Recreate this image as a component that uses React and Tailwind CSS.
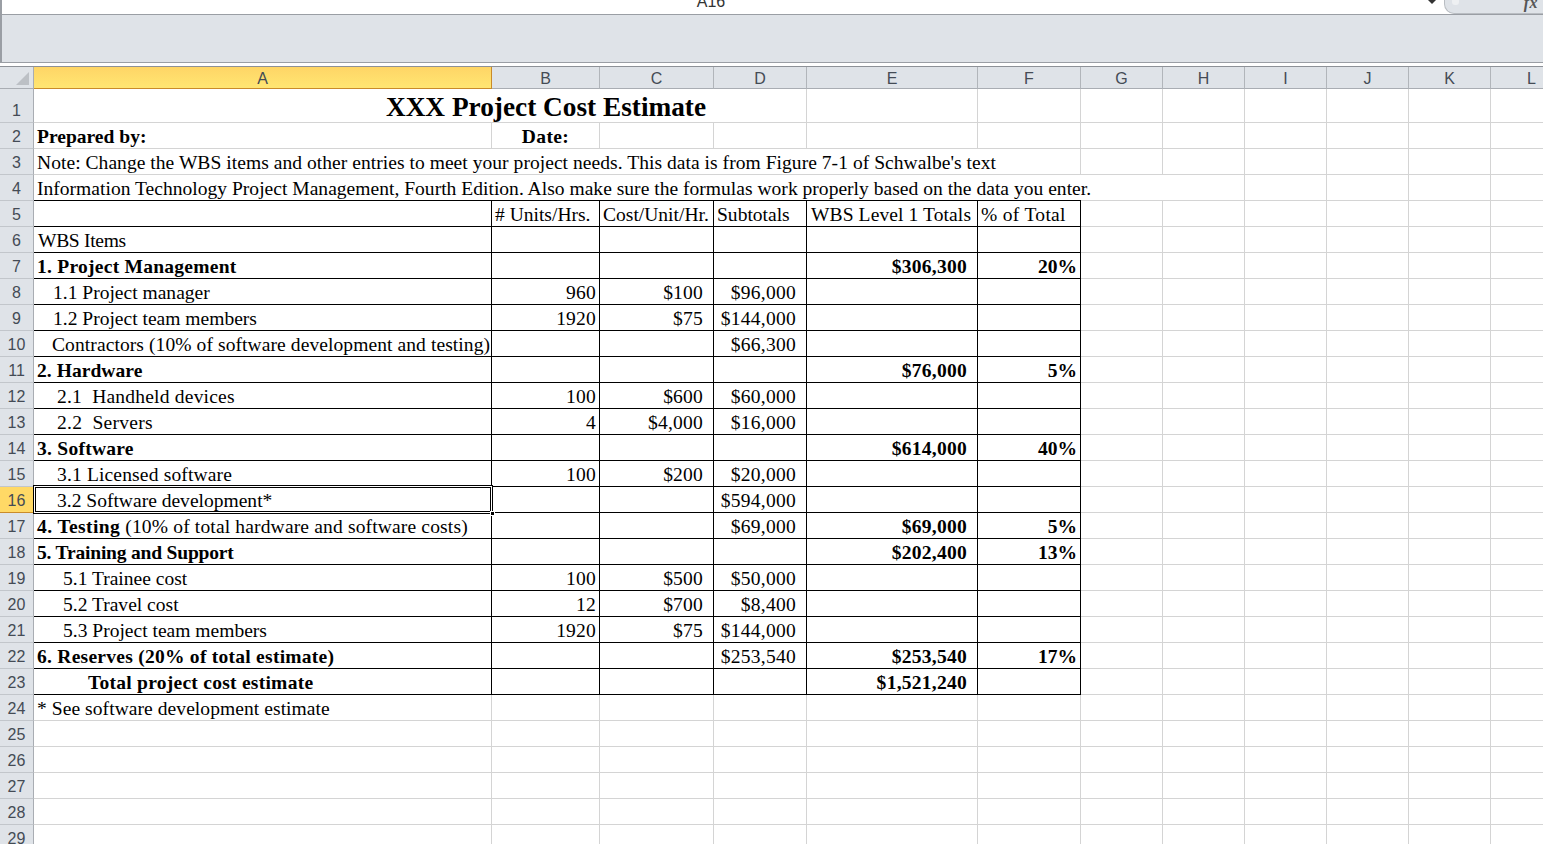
import React from 'react';

const COLS = 'grid grid-cols-[34px_458px_108px_114px_93px_171px_103px_82px_82px_82px_82px_82px_82px]';
const CELL = 'relative flex items-end min-w-0 whitespace-pre text-[19.55px] leading-[22px] text-black';
const LIGHT = 'border-b border-r border-[#d4d4d4]';
const BLACK = 'border-b border-r border-black';
const NO_RIGHT = 'border-b border-[#d4d4d4]';
const NO_RIGHT_BLACK = 'border-b border-black';

const LETTERS = ['A', 'B', 'C', 'D', 'E', 'F', 'G', 'H', 'I', 'J', 'K', 'L'];

const tableRows = [
  { n: 6, a: 'WBS Items', pad: 'pl-[4px]', track: 'tracking-[-0.3px]' },
  { n: 7, a: '1. Project Management', bold: true, e: '$306,300', f: '20%' },
  { n: 8, a: '1.1 Project manager', pad: 'pl-[19px]', b: '960', c: '$100', d: '$96,000' },
  { n: 9, a: '1.2 Project team members', pad: 'pl-[19px]', b: '1920', c: '$75', d: '$144,000' },
  { n: 10, a: 'Contractors (10% of software development and testing)', pad: 'pl-[18px]', track: 'tracking-[0.08px]', d: '$66,300' },
  { n: 11, a: '2. Hardware', bold: true, track: 'tracking-[0.05px]', e: '$76,000', f: '5%' },
  { n: 12, a: '2.1  Handheld devices', pad: 'pl-[23px]', track: 'tracking-[0.2px]', b: '100', c: '$600', d: '$60,000' },
  { n: 13, a: '2.2  Servers', pad: 'pl-[23px]', track: 'tracking-[0.25px]', b: '4', c: '$4,000', d: '$16,000' },
  { n: 14, a: '3. Software', bold: true, e: '$614,000', f: '40%' },
  { n: 15, a: '3.1 Licensed software', pad: 'pl-[23px]', track: 'tracking-[0.15px]', b: '100', c: '$200', d: '$20,000' },
  { n: 16, a: '3.2 Software development*', pad: 'pl-[23px]', d: '$594,000', selected: true },
  {
    n: 17,
    a: (
      <>
        <span className="font-bold tracking-[0.4px]">4. Testing</span> (10% of total hardware and software costs)
      </>
    ),
    track: 'tracking-[0.15px]',
    d: '$69,000',
    e: '$69,000',
    f: '5%',
  },
  { n: 18, a: '5. Training and Support', bold: true, track: 'tracking-[-0.2px]', e: '$202,400', f: '13%' },
  { n: 19, a: '5.1 Trainee cost', pad: 'pl-[29px]', b: '100', c: '$500', d: '$50,000' },
  { n: 20, a: '5.2 Travel cost', pad: 'pl-[29px]', b: '12', c: '$700', d: '$8,400' },
  { n: 21, a: '5.3 Project team members', pad: 'pl-[29px]', b: '1920', c: '$75', d: '$144,000' },
  { n: 22, a: '6. Reserves (20% of total estimate)', bold: true, d: '$253,540', e: '$253,540', f: '17%' },
  { n: 23, a: 'Total project cost estimate', pad: 'pl-[54px]', bold: true, e: '$1,521,240' },
];

const RowHead = ({ n, selected }) => (
  <div
    className={`flex items-end justify-center pb-[2px] border-r font-['Liberation_Sans',sans-serif] text-[16px] leading-[18px] text-[#444b55] ${
      selected
        ? 'bg-[#ffd966] border-b border-b-[#c98b2a] border-r-[#c98b2a]'
        : 'bg-[#dfe3e8] border-b border-b-[#c2c6cb] border-r-[#a9adb3]'
    }`}
  >
    {n}
  </div>
);

const Empties = ({ count }) =>
  Array.from({ length: count }).map((_, i) => <div key={i} className={LIGHT} />);

const Row = ({ n, selected, height = 'h-[26px]', children }) => (
  <div className={`${COLS} ${height}`}>
    <RowHead n={n} selected={selected} />
    {children}
  </div>
);

const TableRow = ({ row }) => (
  <Row n={row.n} selected={row.selected}>
    <div
      className={`${CELL} ${BLACK} ${row.pad || 'pl-[3px]'} ${row.bold ? 'font-bold' : ''} ${
        row.track || (row.bold ? 'tracking-[0.25px]' : '')
      }`}
    >
      {row.a}
      {row.selected && (
        <div className="absolute -left-px -right-[2px] -top-[2px] -bottom-[2px] z-10 border border-black">
          <div className="h-full border border-white">
            <div className="h-full border border-black" />
          </div>
          <div className="absolute -right-[3px] -bottom-[3px] size-[5px] bg-black border border-white" />
        </div>
      )}
    </div>
    <div className={`${CELL} ${BLACK} justify-end pr-[3px] tracking-[0.2px]`}>{row.b}</div>
    <div className={`${CELL} ${BLACK} justify-end pr-[10px] tracking-[0.2px]`}>{row.c}</div>
    <div className={`${CELL} ${BLACK} justify-end pr-[10px] tracking-[0.25px]`}>{row.d}</div>
    <div className={`${CELL} ${BLACK} justify-end pr-[10px] font-bold tracking-[0.25px]`}>{row.e}</div>
    <div className={`${CELL} ${BLACK} justify-end pr-[3px] font-bold`}>{row.f}</div>
    <Empties count={6} />
  </Row>
);

export default function App() {
  return (
    <div className="w-[1543px] h-[844px] overflow-hidden bg-white font-['Liberation_Serif',serif]">
      {/* Formula bar, cut off by the top of the window */}
      <div className="flex h-[15px] border-b border-l-2 border-[#9a9ea4] overflow-hidden">
        <div className="flex flex-1 justify-center pr-[8px]">
          <span className="-mt-[7px] font-['Liberation_Sans',sans-serif] text-[16px] leading-[18px] text-[#333]">
            A16
          </span>
        </div>
        <svg width="8" height="4" viewBox="0 0 8 4" className="mr-[8px]">
          <path d="M0 0h8L4 4z" fill="#333" />
        </svg>
        <div className="flex justify-between w-[99px] pl-[7px] pr-[5px] bg-[#dfe3e8] border-l border-b border-[#b9bdc2] rounded-bl-[10px]">
          <div className="w-[7px] h-[5px] bg-[#eef0f2] rounded-b-[3px]" />
          <span className="-mt-[6px] italic font-bold text-[16px] leading-[18px] tracking-[0.5px] text-[#555]">fx</span>
        </div>
      </div>

      {/* Empty ribbon strip */}
      <div className="h-[48px] bg-[#dfe3e8] border-b border-l-2 border-[#9a9ea4]" />
      <div className="h-[4px] bg-white border-b border-[#8d9197]" />

      {/* Column letters */}
      <div className={`${COLS} h-[22px]`}>
        <div className="flex bg-[#dfe3e8] border-r border-b border-[#a9adb3]">
          <svg width="33" height="21" viewBox="0 0 33 21">
            <path d="M29 5v13H16z" fill="#bcc0c5" />
          </svg>
        </div>
        {LETTERS.map((letter) => (
          <div
            key={letter}
            className={`flex items-center justify-center pt-[2px] border-r border-b font-['Liberation_Sans',sans-serif] text-[16px] leading-[18px] text-[#444b55] ${
              letter === 'A'
                ? 'bg-gradient-to-b from-[#fed566] to-[#ffe672] border-[#c98b2a]'
                : 'bg-[#dfe3e8] border-r-[#b1b5ba] border-b-[#a9adb3]'
            }`}
          >
            {letter}
          </div>
        ))}
      </div>

      <Row n={1} height="h-[34px]">
        <div className={`${CELL} ${NO_RIGHT}`} />
        <div className={`${CELL} ${NO_RIGHT} justify-center text-[27.3px] leading-[29px] font-bold`}>
          XXX Project Cost Estimate
        </div>
        <div className={`${CELL} ${NO_RIGHT}`} />
        <Empties count={9} />
      </Row>

      <Row n={2}>
        <div className={`${CELL} ${LIGHT} pl-[3px] font-bold`}>Prepared by:</div>
        <div className={`${CELL} ${LIGHT} justify-center font-bold tracking-[0.4px]`}>Date:</div>
        <Empties count={10} />
      </Row>

      <Row n={3}>
        <div className={`${CELL} ${NO_RIGHT} pl-[3px] tracking-[0.04px]`}>
          Note: Change the WBS items and other entries to meet your project needs. This data is from Figure 7-1 of Schwalbe's text
        </div>
        <div className={NO_RIGHT} />
        <div className={NO_RIGHT} />
        <div className={NO_RIGHT} />
        <div className={NO_RIGHT} />
        <Empties count={7} />
      </Row>

      <Row n={4}>
        <div className={`${CELL} ${NO_RIGHT_BLACK} pl-[3px] tracking-[0.015px]`}>
          Information Technology Project Management, Fourth Edition. Also make sure the formulas work properly based on the data you enter.
        </div>
        <div className={NO_RIGHT_BLACK} />
        <div className={NO_RIGHT_BLACK} />
        <div className={NO_RIGHT_BLACK} />
        <div className={NO_RIGHT_BLACK} />
        <div className={NO_RIGHT_BLACK} />
        <div className={NO_RIGHT} />
        <Empties count={5} />
      </Row>

      <Row n={5}>
        <div className={BLACK} />
        <div className={`${CELL} ${BLACK} pl-[3px]`}># Units/Hrs.</div>
        <div className={`${CELL} ${BLACK} pl-[3px]`}>Cost/Unit/Hr.</div>
        <div className={`${CELL} ${BLACK} pl-[3px]`}>Subtotals</div>
        <div className={`${CELL} ${BLACK} pl-[4px] tracking-[0.1px]`}>WBS Level 1 Totals</div>
        <div className={`${CELL} ${BLACK} pl-[3px] tracking-[0.3px]`}>% of Total</div>
        <Empties count={6} />
      </Row>

      {tableRows.map((row) => (
        <TableRow key={row.n} row={row} />
      ))}

      <Row n={24}>
        <div className={`${CELL} ${LIGHT} pl-[3px] tracking-[0.06px]`}>* See software development estimate</div>
        <Empties count={11} />
      </Row>

      {[25, 26, 27, 28, 29].map((n) => (
        <Row key={n} n={n}>
          <Empties count={12} />
        </Row>
      ))}
    </div>
  );
}
